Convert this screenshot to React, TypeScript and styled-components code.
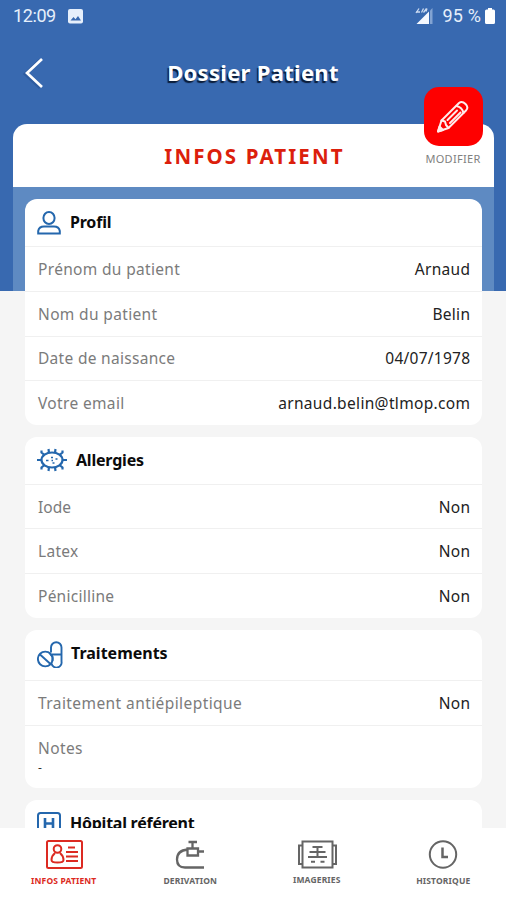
import React from "react";
import styled, { createGlobalStyle } from "styled-components";

const Global = createGlobalStyle`
  * { box-sizing: border-box; }
  body { margin: 0; font-family: "Noto Sans", "Open Sans", sans-serif; }
`;

const Page = styled.div`
  display: flex;
  flex-direction: column;
  width: 506px;
  height: 900px;
  overflow: hidden;
  background: linear-gradient(#3869b0 291px, #f5f5f5 291px);
`;

const StatusBar = styled.header`
  display: flex;
  align-items: center;
  height: 32px;
  flex: none;
  padding: 0 11px 0 13px;
  color: #e6effb;
  font: 400 18px/32px Roboto, sans-serif;
`;

const Clock = styled.span`
  width: 55px;
  letter-spacing: -0.4px;
`;

const Battery = styled.span`
  margin: 0 4px 0 9px;
  word-spacing: 0.5px;
`;

const Spacer = styled.span`
  flex: 1;
`;

const TitleBar = styled.div`
  display: grid;
  grid-template-columns: 60px 1fr 60px;
  align-items: center;
  height: 92px;
  flex: none;
  padding-bottom: 10px;
`;

const Back = styled.button`
  border: 0;
  padding: 0;
  margin-left: 22px;
  width: 26px;
  height: 36px;
  background: none;
`;

const Title = styled.h1`
  margin: 0 0 2px;
  text-align: center;
  color: #fff;
  font-size: 22px;
  font-weight: 700;
  line-height: 30px;
  letter-spacing: 0.3px;
  text-shadow: -1.5px 1.5px 1px #0b1c38;
`;

const Main = styled.main`
  flex: 1;
  min-height: 0;
  margin: 0 12px 0 13px;
`;

const Tab = styled.section`
  position: relative;
  display: flex;
  align-items: center;
  justify-content: center;
  height: 63px;
  border-radius: 14px 14px 0 0;
  background: #fff;
`;

const TabTitle = styled.h2`
  margin: 0 0 0 2px;
  color: #dc1f0c;
  font-size: 20.5px;
  font-weight: 700;
  letter-spacing: 2.1px;
  line-height: 28px;
`;

const Edit = styled.button`
  position: absolute;
  right: 2px;
  top: -37px;
  display: flex;
  flex-direction: column;
  align-items: center;
  width: 78px;
  padding: 0;
  border: 0;
  background: none;
`;

const EditTile = styled.span`
  display: grid;
  place-items: center;
  width: 59px;
  height: 59px;
  border-radius: 15px;
  background: #fe0000;
`;

const EditLabel = styled.span`
  margin-top: 5px;
  color: #808080;
  font: 400 11px/15px "Noto Sans", sans-serif;
  letter-spacing: 0.3px;
`;

const Cards = styled.div`
  display: flex;
  flex-direction: column;
  gap: 12px;
  padding: 12px 12px 0;
  background: linear-gradient(#5e8ac2 104px, transparent 104px);
`;

const Card = styled.section`
  border-radius: 12px;
  background: #fff;
`;

const CardHead = styled.div<{ $h: number; $gap: number }>`
  display: flex;
  align-items: center;
  gap: ${(p) => p.$gap}px;
  height: ${(p) => p.$h}px;
  padding: 0 12px;
  svg { flex: none; }
`;

const CardTitle = styled.h3<{ $ls?: number; $up?: number }>`
  margin: 0 0 ${(p) => p.$up ?? 0}px;
  color: #0b0b0b;
  font-size: 16px;
  font-weight: 700;
  line-height: 22px;
  letter-spacing: ${(p) => p.$ls ?? 0}px;
  white-space: nowrap;
`;

const Row = styled.div`
  display: flex;
  align-items: center;
  justify-content: space-between;
  height: 44.6px;
  padding: 0 12px 0 13px;
  border-top: 1px solid #f0f0f0;
  font-size: 15.5px;
  line-height: 22px;
`;

const Label = styled.span<{ $ls?: number }>`
  color: #7b7b7b;
  letter-spacing: ${(p) => p.$ls ?? 0}px;
`;

const Value = styled.span<{ $ls?: number }>`
  color: #222;
  letter-spacing: ${(p) => p.$ls ?? 0}px;
  margin-right: -${(p) => p.$ls ?? 0}px;
`;

const Notes = styled.div`
  display: flex;
  flex-direction: column;
  height: 63px;
  padding: 11px 13px 0;
  border-top: 1px solid #f0f0f0;
  font-size: 15.5px;
  line-height: 22px;
`;

const Dash = styled.span`
  color: #333;
  font-size: 12px;
  line-height: 17px;
`;

const Nav = styled.nav`
  position: relative;
  display: grid;
  grid-template-columns: repeat(4, 1fr);
  flex: none;
  height: 72px;
  background: #fff;
`;

const NavItem = styled.a<{ $active?: boolean; $up?: boolean }>`
  display: flex;
  flex-direction: column;
  align-items: center;
  padding: 10px 0 0 1px;
  color: ${(p) => (p.$active ? "#dc2a22" : "#656565")};
  svg { height: 34px; }
  span {
    margin-top: ${(p) => (p.$up ? 1 : 2)}px;
    font-size: 8.5px;
    font-weight: 700;
    line-height: 13px;
    letter-spacing: 0.15px;
    white-space: nowrap;
  }
`;

const blue = "#2467ad";

const PhotoIcon = () => (
  <svg width="15" height="15" viewBox="0 0 15 15">
    <rect width="15" height="14.5" rx="2" fill="#e6effb" />
    <path d="M2.5 11.5 5.5 8l2 2.2L10 7l3 4.5z" fill="#3869b0" />
  </svg>
);

const SignalIcon = () => (
  <svg width="19" height="18" viewBox="0 0 19 18">
    <path d="M1.5 17 14 4.5V17z" fill="#f4f8ff" />
    <path d="M15 3.5 17.5 1v16H15z" fill="#82a3d2" />
    <path d="M1 6 4 1.5M1 5h4M6.5 5.5l2-4M8.5 5.5l3-4M12 1.5l-1 3" stroke="#cbdaf0" strokeWidth="1.3" fill="none" />
  </svg>
);

const BatteryIcon = () => (
  <svg width="10" height="16" viewBox="0 0 10 16">
    <path d="M1.5 1.5H3V0h4v1.5h1.5Q10 1.500 10 3v11.500Q10 16 8.500 16h-7Q0 16 0 14.500V3Q0 1.500 1.500 1.500z" fill="#fff" />
  </svg>
);

const BackIcon = () => (
  <svg width="26" height="36" viewBox="0 0 26 36">
    <path d="M20 4 5 18 20 32" fill="none" stroke="#173f79" strokeWidth="3" opacity=".3" transform="translate(-2 1)" />
    <path d="M20 4 5 18 20 32" fill="none" stroke="#fff" strokeWidth="2.7" />
  </svg>
);

const PencilIcon = () => (
  <svg width="36" height="36" viewBox="0 0 36 36" fill="none" stroke="#ffecec" strokeWidth="2" strokeLinejoin="round" strokeLinecap="round">
    <path d="M3 32.500 6.500 21.500 24 4Q27 1.500 30.500 5Q34 8.500 31 11.500L13.500 29z" />
    <path d="M6.500 21.500 10 22.500 11 26 13.500 29M21.500 7Q27 8 28.500 14M12.500 21 22 11.500M15 24 25.500 13.500" />
    <path d="M3 32.500 4.500 27.500 8 31z" fill="#ffecec" />
  </svg>
);

const ProfileIcon = () => (
  <svg width="24" height="24" viewBox="0 0 24 24" fill="none" stroke={blue} strokeWidth="2">
    <ellipse cx="12" cy="7" rx="5.600" ry="6" />
    <path d="M1.200 22.500V20Q2 15.500 7 15.500H17Q22 15.500 22.800 20V22.500z" />
  </svg>
);

const GermIcon = () => (
  <svg width="30" height="24" viewBox="0 0 30 24" fill="none" stroke={blue} strokeWidth="2.200">
    <ellipse cx="15" cy="12" rx="10.500" ry="7.500" />
    <path d="M0 12h5M25 12H30M12 5 11.500 1M18 5 18.500 1M12 19 11.500 23M18 19 18.500 23M7.500 7 4.500 4.500V2.500M22.500 7l3-2.500V2.500M7.500 17l-3 2.500v2M22.500 17l3 2.500v2" />
    <path d="M9 12.500h2.500M14 9.500h2M18.500 11h2M14.500 12.500h1.500M15.500 15h2" strokeWidth="1.700" />
  </svg>
);

const PillsIcon = () => (
  <svg width="26" height="27" viewBox="0 0 26 27" fill="none" stroke={blue} strokeWidth="1.900">
    <path d="M14 11.500V6.500A5 5 0 0 1 24.500 6.500V20.500A5 5 0 0 1 14.500 22.500M15 13.500H24.500" />
    <circle cx="8.300" cy="18" r="7.400" />
    <path d="M3 13.500 13.500 23" />
    <path d="M12.500 12 15.500 16V20" />
  </svg>
);

const HospitalIcon = () => (
  <svg width="24" height="24" viewBox="0 0 24 24" fill="none" stroke={blue} strokeWidth="2">
    <rect x="1" y="1" width="22" height="22" rx="2.500" />
    <path d="M8 6v12M16 6v12M8 11.500h8" strokeWidth="2.600" />
  </svg>
);

const IdIcon = () => (
  <svg width="38" height="34" viewBox="0 0 38 34" fill="none" stroke="currentColor" strokeWidth="2">
    <rect x="2" y="3" width="35" height="27" rx="1.500" />
    <circle cx="12.500" cy="11" r="3.800" />
    <path d="M10 15Q6.500 18 6.500 22Q6.500 24.500 12.500 24.500T18.500 22Q18.500 18 15 15" />
    <path d="M23 9.500h7M21 14h12M21 18.500h12M21 23h12" />
  </svg>
);

const TapIcon = () => (
  <svg width="30" height="34" viewBox="0 0 30 34" fill="none" stroke="currentColor" strokeWidth="2.300">
    <path d="M13.500 4h8.500M17.500 4v6M12.500 10.500h10.500v7h-10.500zM23 13.500h6M12.500 11.500Q2 12.500 2 21.500Q2 29.500 10 29.500H29" />
  </svg>
);

const XrayIcon = () => (
  <svg width="40" height="34" viewBox="0 0 40 34" fill="none" stroke="currentColor" strokeWidth="2">
    <path d="M5.500 3.500h30v26h-30zM5.500 7.500H2v18.500H5.500M35.500 7.500H39v18.500H35.500" />
    <path d="M20.500 8v11M15.500 9h10M12.500 14h16M11 19h19M14 23.800h4M23.500 23.800h4" />
  </svg>
);

const ClockIcon = () => (
  <svg width="30" height="34" viewBox="0 0 30 34" fill="none" stroke="currentColor" strokeWidth="2">
    <circle cx="15" cy="16.500" r="13.200" />
    <path d="M14.500 9.500v9.500h5.500" strokeWidth="2.500" />
  </svg>
);

type Field = { label: string; value: string; ls?: number; vls?: number };

const profile: Field[] = [
  { label: "Prénom du patient", value: "Arnaud", ls: 0.33, vls: 0.3 },
  { label: "Nom du patient", value: "Belin", ls: 0.35, vls: 0.3 },
  { label: "Date de naissance", value: "04/07/1978", ls: 0.3, vls: 0.25 },
  { label: "Votre email", value: "arnaud.belin@tlmop.com", ls: 0.35, vls: 0.33 },
];

const allergies: Field[] = [
  { label: "Iode", value: "Non", vls: 0.3 },
  { label: "Latex", value: "Non", ls: 0.3, vls: 0.3 },
  { label: "Pénicilline", value: "Non", ls: 0.25, vls: 0.3 },
];

const treatments: Field[] = [
  { label: "Traitement antiépileptique", value: "Non", ls: 0.42, vls: 0.3 },
];

const Fields = ({ items }: { items: Field[] }) => (
  <>
    {items.map((f) => (
      <Row key={f.label}>
        <Label $ls={f.ls}>{f.label}</Label>
        <Value $ls={f.vls}>{f.value}</Value>
      </Row>
    ))}
  </>
);

export default function App() {
  return (
    <Page>
      <Global />
      <StatusBar>
        <Clock>12:09</Clock>
        <PhotoIcon />
        <Spacer />
        <SignalIcon />
        <Battery>95 %</Battery>
        <BatteryIcon />
      </StatusBar>
      <TitleBar>
        <Back aria-label="Retour"><BackIcon /></Back>
        <Title>Dossier Patient</Title>
      </TitleBar>
      <Main>
        <Tab>
          <TabTitle>INFOS PATIENT</TabTitle>
          <Edit>
            <EditTile><PencilIcon /></EditTile>
            <EditLabel>MODIFIER</EditLabel>
          </Edit>
        </Tab>
        <Cards>
          <Card>
            <CardHead $h={47.4} $gap={9}>
              <ProfileIcon />
              <CardTitle $ls={-0.2} $up={1}>Profil</CardTitle>
            </CardHead>
            <Fields items={profile} />
          </Card>
          <Card>
            <CardHead $h={47} $gap={9}>
              <GermIcon />
              <CardTitle $ls={-0.2}>Allergies</CardTitle>
            </CardHead>
            <Fields items={allergies} />
          </Card>
          <Card>
            <CardHead $h={50.5} $gap={8}>
              <PillsIcon />
              <CardTitle $ls={0} $up={4}>Traitements</CardTitle>
            </CardHead>
            <Fields items={treatments} />
            <Notes>
              <Label $ls={0.4}>Notes</Label>
              <Dash>-</Dash>
            </Notes>
          </Card>
          <Card>
            <CardHead $h={48} $gap={9}>
              <HospitalIcon />
              <CardTitle $ls={-0.25} $up={2}>Hôpital référent</CardTitle>
            </CardHead>
          </Card>
        </Cards>
      </Main>
      <Nav>
        <NavItem $active><IdIcon /><span>INFOS PATIENT</span></NavItem>
        <NavItem><TapIcon /><span>DERIVATION</span></NavItem>
        <NavItem $up><XrayIcon /><span>IMAGERIES</span></NavItem>
        <NavItem><ClockIcon /><span>HISTORIQUE</span></NavItem>
      </Nav>
    </Page>
  );
}
